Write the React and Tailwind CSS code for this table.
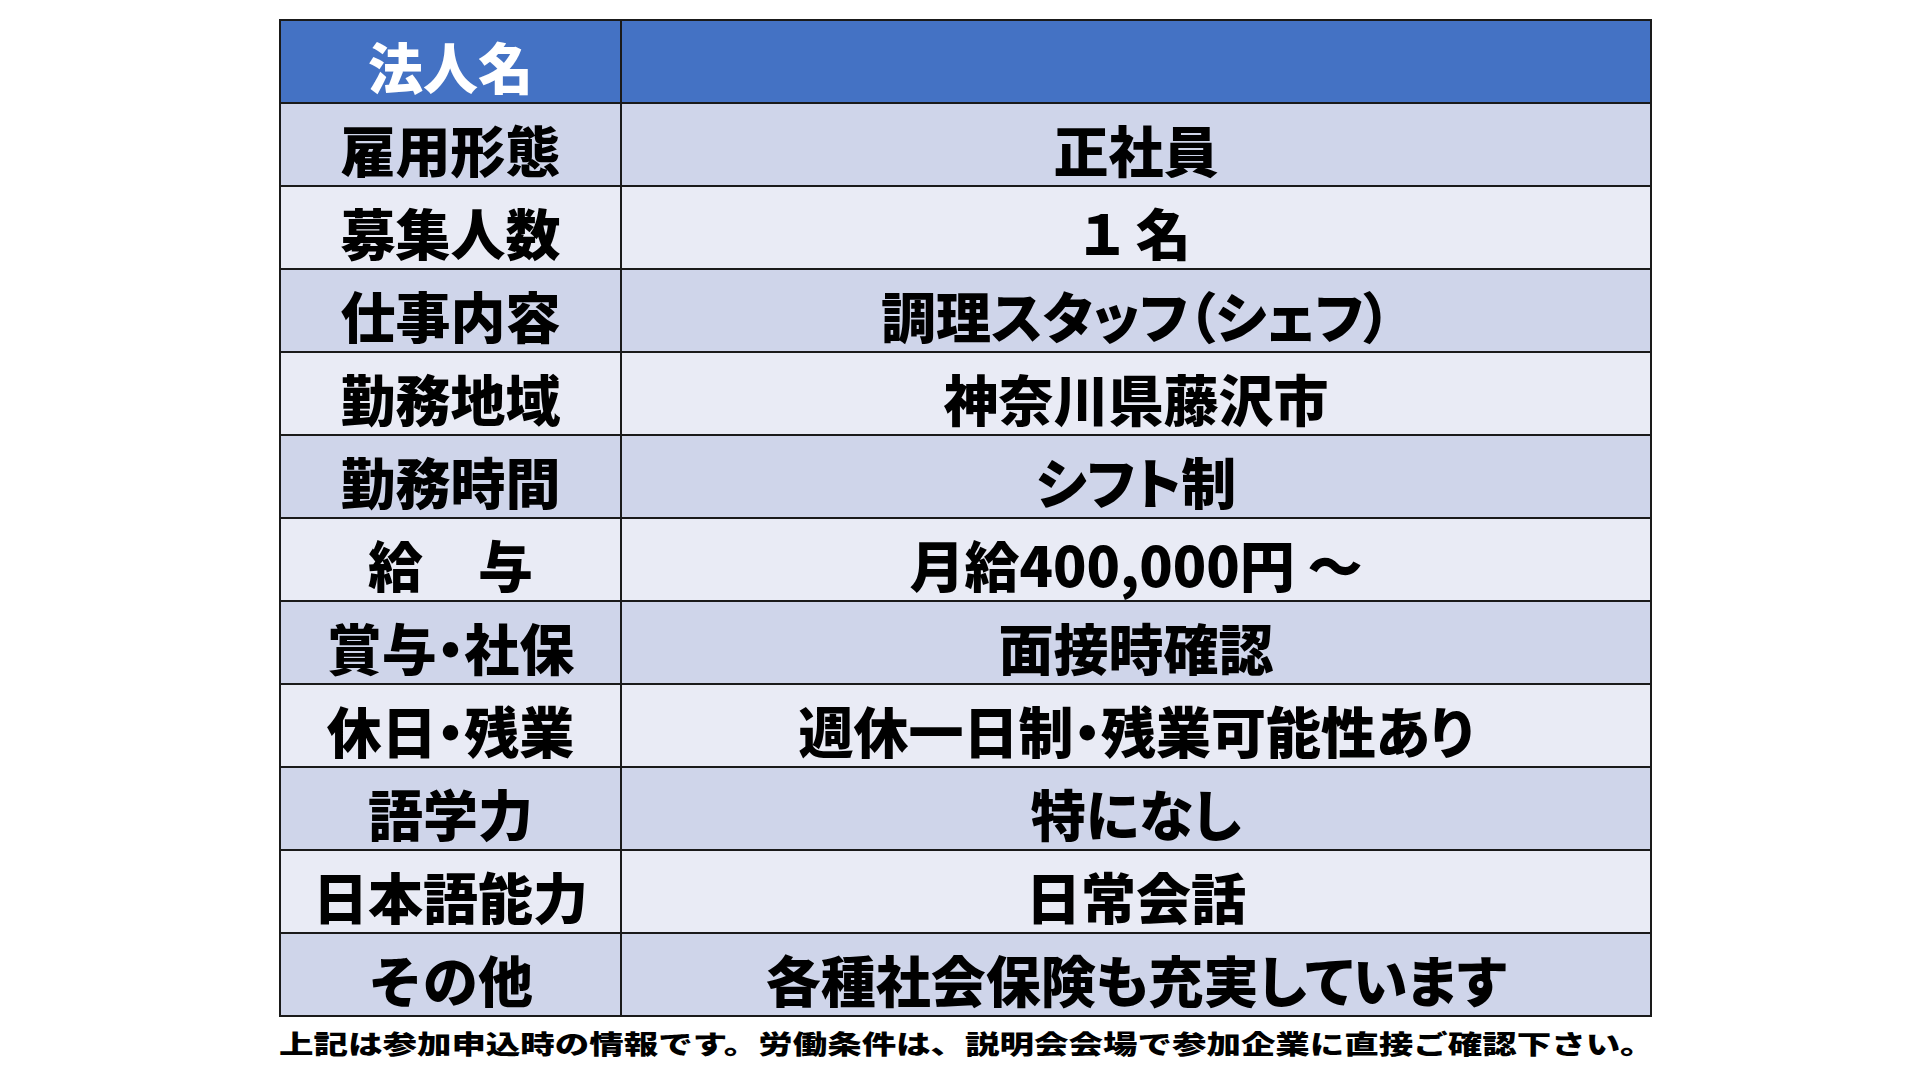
import React from "react";

const rows = [
  ["雇用形態", "正社員"],
  ["募集人数", "１ 名"],
  ["仕事内容", "調理スタッフ（シェフ）"],
  ["勤務地域", "神奈川県藤沢市"],
  ["勤務時間", "シフト制"],
  ["給　与", "月給400,000円 ～"],
  ["賞与・社保", "面接時確認"],
  ["休日・残業", "週休一日制・残業可能性あり"],
  ["語学力", "特になし"],
  ["日本語能力", "日常会話"],
  ["その他", "各種社会保険も充実しています"],
];

const font = { fontFamily: '"Noto Sans CJK JP", "Noto Sans", sans-serif' };
const palt = { fontFeatureSettings: '"palt"' };

export default function App() {
  return (
    <div className="w-[1920px] h-[1080px] bg-white pt-[19px] pl-[279px]" style={font}>
      <div className="w-[1373px] border-2 border-[#1a1a1a] flex flex-col">
        <div className="flex h-[83px] border-b-2 border-[#1a1a1a] bg-[#4472C4]">
          <div className="w-[341px] border-r-2 border-[#1a1a1a] flex items-center justify-center pt-[8px] text-white text-[55px] font-black leading-none">
            法人名
          </div>
          <div className="flex-1" />
        </div>
        {rows.map(([k, v], i) => {
          const last = i === rows.length - 1;
          const bg = i % 2 === 0 ? "bg-[#CFD5EA]" : "bg-[#E9EBF5]";
          return (
            <div
              key={k}
              className={
                "flex " +
                bg +
                (last ? " h-[81px]" : " h-[83px] border-b-2 border-[#1a1a1a]")
              }
            >
              <div
                className="w-[341px] border-r-2 border-[#1a1a1a] flex items-center justify-center pt-[8px] text-black text-[55px] font-black leading-none whitespace-pre"
                style={k.includes("・") ? palt : undefined}
              >
                {k}
              </div>
              <div
                className="flex-1 flex items-center justify-center pt-[8px] text-black text-[55px] font-black leading-none whitespace-pre"
                style={palt}
              >
                {v}
              </div>
            </div>
          );
        })}
      </div>
      <div className="mt-[9px] h-[34px] flex items-center">
        <span className="inline-block origin-left scale-x-[1.326] text-[26px] font-black leading-none text-black whitespace-nowrap">
          上記は参加申込時の情報です。労働条件は、説明会会場で参加企業に直接ご確認下さい。
        </span>
      </div>
    </div>
  );
}
